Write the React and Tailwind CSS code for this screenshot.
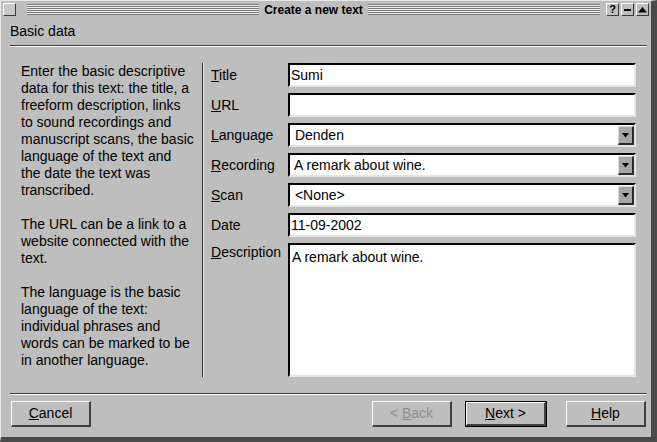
import React from "react";

const font = { fontFamily: '"Liberation Sans", Arial, sans-serif' };

function Bevel({ children, className = "" }) {
  return (
    <div
      className={`flex items-center justify-center border-t border-l border-t-white border-l-white border-r border-b border-r-[#3a3a3a] border-b-[#3a3a3a] bg-[#bebebe] ${className}`}
    >
      {children}
    </div>
  );
}

function Field({ children, dropdown, className = "h-[24px]" }) {
  return (
    <div
      className={`relative flex bg-white border-t-2 border-l-2 border-t-black border-l-black border-b-2 border-r-2 border-b-[#e4e4e4] border-r-[#e4e4e4] ${className}`}
    >
      <div className="flex-1 pl-[1px] text-[14px] leading-[20px] text-black">{children}</div>
      {dropdown && (
        <div className="absolute right-[0px] top-[1px] w-[16px] h-[19px] bg-[#a6a6a6] border-t border-l border-t-[#d8d8d8] border-l-[#d8d8d8] border-b-2 border-r-2 border-b-[#2a2a2a] border-r-[#2a2a2a] flex items-center justify-center">
          <svg width="8" height="5" viewBox="0 0 8 5">
            <path d="M0 0H7L3.5 4.5Z" fill="#000" />
          </svg>
        </div>
      )}
    </div>
  );
}

function Button({ children, isDefault, disabled, className = "" }) {
  return (
    <div
      className={`h-[26px] w-[80px] ${
        isDefault ? "border border-black" : ""
      } ${className}`}
    >
      <div
        className={`h-full flex items-center justify-center border-t border-l border-t-white border-l-white border-b-2 border-r-2 border-b-[#404040] border-r-[#404040] text-[14px] ${
          disabled ? "text-[#8e8e8e]" : "text-black"
        }`}
      >
        {children}
      </div>
    </div>
  );
}

const rows = [
  { label: "itle", key: "T", value: "Sumi" },
  { label: "RL", key: "U", value: "" },
  { label: "anguage", key: "L", value: " Denden", dropdown: true },
  { label: "ecording", key: "R", value: " A remark about wine.", dropdown: true },
  { label: "can", key: "S", value: " <None>", dropdown: true },
  { label: "Date", key: "", value: "11-09-2002" },
];

export default function App() {
  return (
    <div style={font} className="w-[657px] h-[442px] bg-[#bebebe] overflow-hidden">
      <div className="w-[657px] h-[442px] flex flex-col border-l border-t border-l-[#e6e6e6] border-t-[#e6e6e6] border-r-[6px] border-b-[5px] border-r-[#4a4a4a] border-b-[#4a4a4a]">
        {/* title bar */}
        <div className="h-[17px] flex items-center pl-[2px] pr-[2px]">
          <Bevel className="w-[13px] h-[13px] bg-[#c8c8c8]" />
          <div className="flex-1 ml-[11px] h-[11px] bg-[repeating-linear-gradient(to_bottom,#7a7a7a_0px,#7a7a7a_1px,#eeeeee_1px,#eeeeee_2px)]" />
          <div className="px-[5px] text-[12px] font-bold text-black leading-[14px]">Create a new text</div>
          <div className="flex-1 h-[11px] bg-[repeating-linear-gradient(to_bottom,#7a7a7a_0px,#7a7a7a_1px,#eeeeee_1px,#eeeeee_2px)]" />
          <div className="flex gap-[2px] ml-[6px]">
            <Bevel className="w-[13px] h-[13px] text-[11px] font-bold leading-none">?</Bevel>
            <Bevel className="w-[13px] h-[13px]">
              <div className="w-[7px] h-[2px] bg-black" />
            </Bevel>
            <Bevel className="w-[13px] h-[13px]">
              <svg width="9" height="6" viewBox="0 0 9 6">
                <path d="M0 5.5H9L4.5 0Z" fill="#000" />
              </svg>
            </Bevel>
          </div>
        </div>

        {/* section header */}
        <div className="h-[27px] pl-[9px] flex items-center text-[14px] text-black">Basic data</div>
        <div className="ml-[9px] mr-[4px] h-[1px] bg-[#404040]" />
        <div className="ml-[9px] mr-[4px] h-[1px] bg-white" />

        {/* main */}
        <div className="mt-[16px] h-[314px] flex">
          <div className="ml-[20px] w-[176px] text-[14px] leading-[17px] text-black whitespace-nowrap">
            <p>
              Enter the basic descriptive
              <br />
              data for this text: the title, a
              <br />
              freeform description, links
              <br />
              to sound recordings and
              <br />
              manuscript scans, the basic
              <br />
              language of the text and
              <br />
              the date the text was
              <br />
              transcribed.
            </p>
            <p className="mt-[17px]">
              The URL can be a link to a
              <br />
              website connected with the
              <br />
              text.
            </p>
            <p className="mt-[17px]">
              The language is the basic
              <br />
              language of the text:
              <br />
              individual phrases and
              <br />
              words can be marked to be
              <br />
              in another language.
            </p>
          </div>
          <div className="ml-[5px] w-[1px] bg-[#303030]" />
          <div className="w-[1px] bg-[#e8e8e8]" />

          <div className="ml-[7px] w-[425px] flex flex-col gap-[6px]">
            {rows.map((r) => (
              <div key={r.label} className="flex items-center">
                <div className="w-[77px] text-[14px] text-black">
                  {r.key && <u>{r.key}</u>}
                  {r.label}
                </div>
                <div className="w-[348px]">
                  <Field dropdown={r.dropdown}>
                    <span className="whitespace-pre">{r.value}</span>
                  </Field>
                </div>
              </div>
            ))}
            <div className="flex flex-1">
              <div className="w-[77px] -mt-[1px] text-[14px] text-black">
                <u>D</u>escription
              </div>
              <div className="w-[348px] flex">
                <Field className="flex-1">
                  <div className="pt-[2px] pl-[1px]">A remark about wine.</div>
                </Field>
              </div>
            </div>
          </div>
        </div>

        {/* bottom separator */}
        <div className="mt-[16px] ml-[9px] mr-[4px] h-[1px] bg-[#404040]" />
        <div className="ml-[9px] mr-[4px] h-[1px] bg-white" />

        {/* buttons */}
        <div className="mt-[6px] flex pl-[10px]">
          <Button>
            <span>
              <u>C</u>ancel
            </span>
          </Button>
          <Button disabled className="ml-[281px]">
            <span>
              &lt; <u>B</u>ack
            </span>
          </Button>
          <Button isDefault className="ml-[13px] w-[82px]">
            <span>
              <u>N</u>ext &gt;
            </span>
          </Button>
          <Button className="ml-[19px]">
            <span>
              <u>H</u>elp
            </span>
          </Button>
        </div>
      </div>
    </div>
  );
}
